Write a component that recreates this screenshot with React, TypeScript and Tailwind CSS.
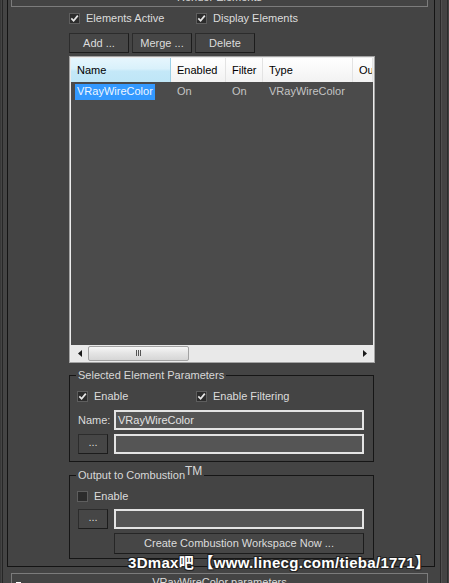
import React from "react";

function Check({ checked }: { checked?: boolean }) {
  return (
    <span className="w-[11px] h-[11px] shrink-0 border border-[#5e5e5e] bg-[#2c2c2c] flex items-center justify-center">
      {checked && (
        <svg width="9" height="9" viewBox="0 0 9 9">
          <path d="M1.3 4.4 L3.6 6.8 L7.8 1.6" stroke="#e6e6e6" strokeWidth="1.7" fill="none" />
        </svg>
      )}
    </span>
  );
}

function Btn({ children, className = "" }: { children: React.ReactNode; className?: string }) {
  return (
    <button
      className={`h-[20px] bg-[#464646] border border-[#2c2c2c] border-r-[#1c1c1c] border-b-[#1c1c1c] text-[#dcdcdc] text-[11px] flex items-center justify-center ${className}`}
    >
      {children}
    </button>
  );
}

function Field({ value = "" }: { value?: string }) {
  return (
    <div className="w-[250px] h-[20px] border-2 border-[#e4e4e4] bg-[#555555] text-[#e2e2e2] pl-[2px] flex items-center leading-none">
      {value}
    </div>
  );
}

function RolloutHeader({ title, className = "" }: { title: string; className?: string }) {
  return (
    <div
      className={`relative h-[19px] w-[417px] border border-[#7c7c7c] flex items-center justify-center text-[#dcdcdc] ${className}`}
    >
      <span className="absolute left-[4px] top-[8px] w-[5px] h-[2px] bg-white" />
      {title}
    </div>
  );
}

const headers = [
  { label: "Name", w: "w-[100px]", active: true },
  { label: "Enabled", w: "w-[55px]" },
  { label: "Filter", w: "w-[37px]" },
  { label: "Type", w: "w-[90px]" },
  { label: "Ou", w: "flex-1" },
];

export default function App() {
  return (
    <div className="relative w-[449px] h-[583px] overflow-hidden bg-[#444444] flex font-['Liberation_Sans',Arial,sans-serif] text-[11px] text-[#dcdcdc]">
      <div className="w-px bg-[#383838]" />
      <div className="w-px" />
      <div className="w-px bg-[#262626]" />
      <div className="w-[4px]" />

      <div className="w-[428px] shrink-0 flex flex-col">
        <div className="border-x border-b border-[#141414] flex flex-col pb-[7px]">
          <RolloutHeader title="Render Elements" className="-mt-[12px] ml-[3px]" />

          <div className="pl-[61px] flex flex-col">
            <div className="mt-[4px] h-[14px] flex items-center">
              <label className="w-[127px] flex items-center gap-[6px]">
                <Check checked />
                <span>Elements Active</span>
              </label>
              <label className="flex items-center gap-[6px]">
                <Check checked />
                <span>Display Elements</span>
              </label>
            </div>

            <div className="mt-[8px] flex gap-[3px]">
              <Btn className="w-[60px]">Add ...</Btn>
              <Btn className="w-[60px]">Merge ...</Btn>
              <Btn className="w-[60px]">Delete</Btn>
            </div>

            {/* element list */}
            <div className="mt-[3px] w-[306px] h-[307px] border border-[#a3a3a3]">
              <div className="h-full border border-[#ececec] flex flex-col">
                <div className="h-[24px] flex bg-[linear-gradient(#ffffff,#f2f2f2)] text-black">
                  {headers.map((h) => (
                    <div
                      key={h.label}
                      className={`${h.w} h-full flex items-center pl-[6px] overflow-hidden whitespace-nowrap ${
                        h.active
                          ? "bg-[linear-gradient(#e6f6fd_0%,#d9f1fb_45%,#c4e8f8_55%,#bfe6f7_100%)] border-r border-[#9ccfe6]"
                          : "border-r border-[#e3e3e3]"
                      }`}
                    >
                      {h.label}
                    </div>
                  ))}
                </div>
                <div className="flex-1 bg-[#4b4b4b] flex flex-col">
                  <div className="mt-[1px] h-[17px] flex items-center text-[#c4c4c4]">
                    <div className="w-[100px] pl-[4px] flex">
                      <span className="bg-[#3399ff] text-[#eef6ff] px-[2px] h-[16px] flex items-center">VRayWireColor</span>
                    </div>
                    <div className="w-[55px] pl-[6px]">On</div>
                    <div className="w-[37px] pl-[6px]">On</div>
                    <div className="w-[90px] pl-[6px]">VRayWireColor</div>
                  </div>
                </div>
                {/* horizontal scrollbar */}
                <div className="h-[16px] bg-[#e9e9e9] flex items-center">
                  <div className="w-[17px] h-full flex items-center justify-center">
                    <svg width="4" height="7" viewBox="0 0 4 7">
                      <path d="M4 0 L0 3.5 L4 7 Z" fill="#1a1a1a" />
                    </svg>
                  </div>
                  <div className="w-[101px] h-[15px] rounded-[2px] border border-[#a2a2a2] bg-[linear-gradient(#f6f6f6,#e4e4e4_50%,#d6d6d6)] flex items-center justify-center gap-[1px]">
                    <span className="w-px h-[6px] bg-[#555]" />
                    <span className="w-px h-[6px] bg-[#555]" />
                    <span className="w-px h-[6px] bg-[#555]" />
                  </div>
                  <div className="flex-1" />
                  <div className="w-[17px] h-full flex items-center justify-center">
                    <svg width="4" height="7" viewBox="0 0 4 7">
                      <path d="M0 0 L4 3.5 L0 7 Z" fill="#1a1a1a" />
                    </svg>
                  </div>
                </div>
              </div>
            </div>

            {/* Selected Element Parameters */}
            <fieldset className="mt-[6px] w-[305px] border border-[#161616] pb-[7px]">
              <legend className="ml-[6px] px-[2px] leading-[13px] text-[#d8d8d8]">Selected Element Parameters</legend>
              <div className="mt-[7px] h-[14px] pl-[7px] flex items-center">
                <label className="w-[119px] flex items-center gap-[6px]">
                  <Check checked />
                  <span>Enable</span>
                </label>
                <label className="flex items-center gap-[6px]">
                  <Check checked />
                  <span>Enable Filtering</span>
                </label>
              </div>
              <div className="mt-[7px] pl-[8px] flex items-center">
                <span className="w-[36px]">Name:</span>
                <Field value="VRayWireColor" />
              </div>
              <div className="mt-[4px] pl-[8px] flex items-center gap-[6px]">
                <Btn className="w-[30px] text-[#b8b8b8] items-end pb-[3px]">...</Btn>
                <Field />
              </div>
            </fieldset>

            {/* Output to Combustion */}
            <fieldset className="mt-[7px] w-[305px] border border-[#161616] pb-[4px]">
              <legend className="ml-[6px] px-[2px] leading-[13px] text-[#d8d8d8]">
                Output to Combustion<span className="relative -top-[4px] text-[12px]">TM</span>
              </legend>
              <div className="mt-[7px] h-[14px] pl-[7px] flex items-center">
                <label className="flex items-center gap-[6px]">
                  <Check />
                  <span>Enable</span>
                </label>
              </div>
              <div className="mt-[6px] pl-[8px] flex items-center gap-[6px]">
                <Btn className="w-[30px] text-[#b8b8b8] items-end pb-[3px]">...</Btn>
                <Field />
              </div>
              <div className="mt-[4px] pl-[44px]">
                <Btn className="w-[250px] h-[21px] border-[#262626]">Create Combustion Workspace Now ...</Btn>
              </div>
            </fieldset>
          </div>
        </div>

        <RolloutHeader title="VRayWireColor parameters" className="mt-[6px] ml-[4px]" />
      </div>

      <div className="w-[5px]" />
      <div className="w-px bg-[#2a2a2a]" />
      <div className="w-px bg-[#505050]" />
      <div className="w-[5px]" />
      <div className="w-px bg-[#2c2c2c]" />
      <div className="w-px" />

      <div className="absolute left-[128px] top-[554px] font-bold text-[15px] leading-[18px] tracking-[0.3px] text-white whitespace-nowrap font-['Liberation_Sans','Noto_Sans_CJK_SC',sans-serif] [text-shadow:1px_1px_0_#222,-1px_-1px_0_#222,1px_-1px_0_#222,-1px_1px_0_#222]">
        3Dmax吧 【www.linecg.com/tieba/1771】
      </div>
    </div>
  );
}
